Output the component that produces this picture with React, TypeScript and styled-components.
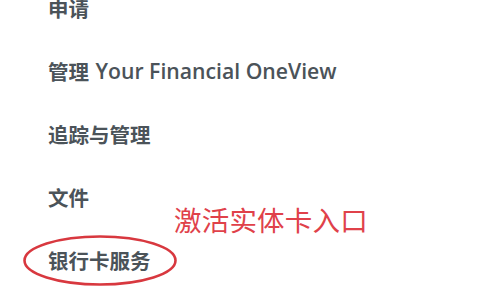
import React from 'react';
import styled, { createGlobalStyle } from 'styled-components';

const Global = createGlobalStyle`
  html, body { margin: 0; padding: 0; background: #ffffff; }
  body { width: 480px; height: 300px; overflow: hidden; }
`;

const Page = styled.div`
  position: relative;
  width: 480px;
  height: 300px;
  overflow: hidden;
  background: #ffffff;
  font-family: "Open Sans", "Noto Sans CJK SC", sans-serif;
`;

const Menu = styled.ul`
  list-style: none;
  margin: -24px 0 0 0;
  padding: 0 0 0 48px;
  display: flex;
  flex-direction: column;
`;

const Item = styled.li`
  position: relative;
  height: 63px;
  display: flex;
  align-items: center;
  font-size: 20.5px;
  font-weight: 600;
  color: #4b5359;
`;

const Latin = styled.span`
  font-size: 21.2px;
  margin-left: 1px;
`;

const Ring = styled.svg`
  position: absolute;
  left: -26px;
  top: 6px;
  width: 156px;
  height: 53px;
  pointer-events: none;
`;

const Note = styled.div`
  position: absolute;
  left: 174px;
  top: 199px;
  font-family: "Noto Sans CJK SC", sans-serif;
  font-size: 27.5px;
  font-weight: 400;
  color: #e0414a;
  letter-spacing: 0.2px;
`;

const items: { label: string; latin?: string }[] = [
  { label: '申请' },
  { label: '管理', latin: 'Your Financial OneView' },
  { label: '追踪与管理' },
  { label: '文件' },
  { label: '银行卡服务' },
];

export default function App() {
  return (
    <Page>
      <Global />
      <Menu>
        {items.map((it, i) => (
          <Item key={it.label + i}>
            {it.label}
            {it.latin && <Latin>&nbsp;{it.latin}</Latin>}
            {i === items.length - 1 && (
              <Ring viewBox="0 0 156 53">
                <ellipse cx="78" cy="26.5" rx="75.5" ry="24" fill="none" stroke="#d8383f" strokeWidth="2.6" />
              </Ring>
            )}
          </Item>
        ))}
      </Menu>
      <Note>激活实体卡入口</Note>
    </Page>
  );
}
